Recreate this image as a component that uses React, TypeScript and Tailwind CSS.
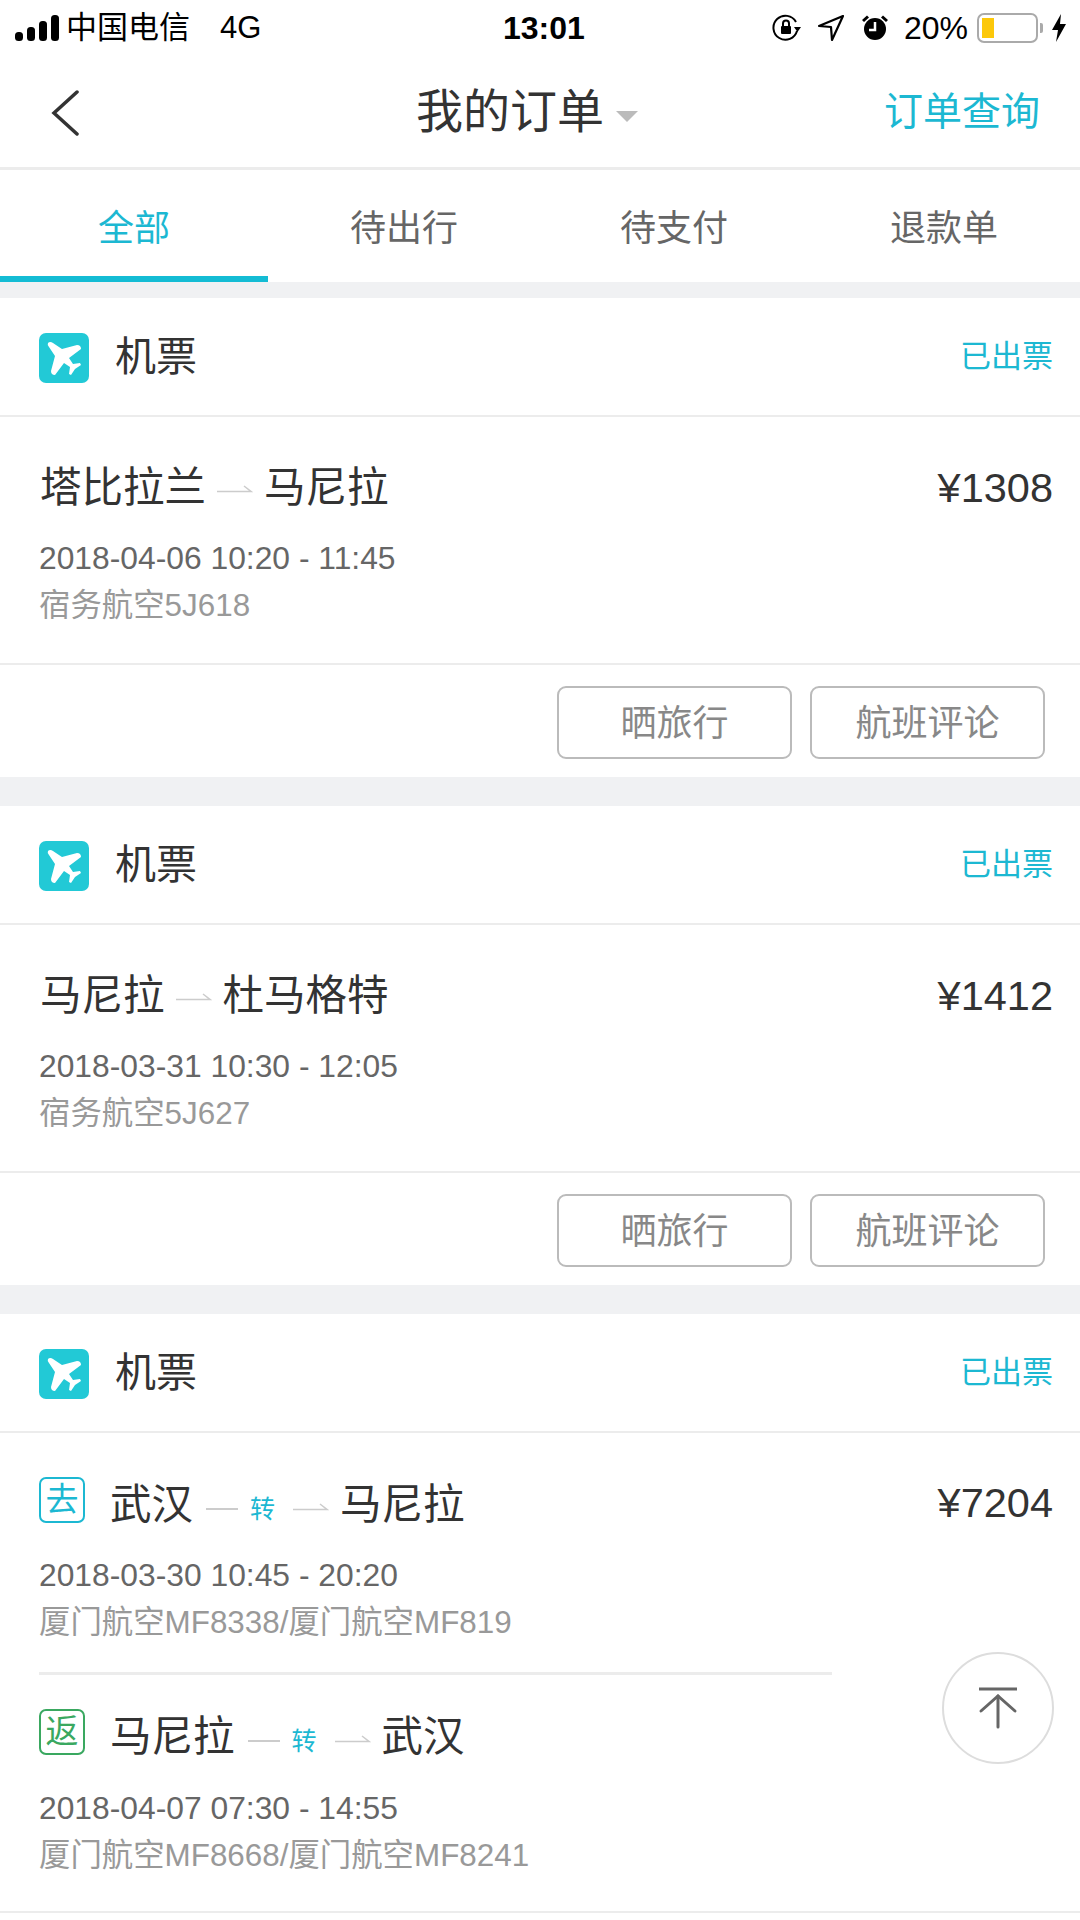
const font = "font-['Liberation_Sans','Noto_Sans_CJK_SC',sans-serif]"

function PlaneBadge() {
  return (
    <div className="w-[50px] h-[50px] rounded-[7px] bg-[#22c9d6]">
      <svg width="50" height="50" viewBox="0 0 50 50" fill="#fff">
        <path d="M9 10 Q11 8 14 10 L23 16 L38 12 Q42 12 42 16 L30 25 L34 31 L41 30 L42 32 L36 36 L32 42 L30 41 L31 34 L25 30 L16 42 Q12 42 12 38 L16 23 L10 14 Q8 12 9 10 Z" />
      </svg>
    </div>
  )
}

function Arrow() {
  return (
    <svg width="36" height="10" viewBox="0 0 36 10" fill="none" stroke="#ccc" strokeWidth="1.5">
      <path d="M0 7.5 H34 L27 2" />
    </svg>
  )
}

function Route({ from, to, transfer }: { from: string; to: string; transfer?: boolean }) {
  if (transfer) {
    return (
      <div className="flex items-center text-[41.5px] leading-[50px] text-[#333]">
        <span>{from}</span>
        <span className="w-[32px] h-[2px] bg-[#ccc] ml-[13px] mt-[9px]"></span>
        <span className="text-[25px] text-[#1cb8d2] ml-[12px] mr-[18px] mt-[9px]">转</span>
        <div className="mt-[5px]"><Arrow /></div>
        <span className="ml-[11px]">{to}</span>
      </div>
    )
  }
  return (
    <div className="flex items-center text-[41.5px] leading-[50px] text-[#333]">
      <span>{from}</span>
      <div className="ml-[11px] mr-[11px] mt-[2px]"><Arrow /></div>
      <span>{to}</span>
    </div>
  )
}

function CardHeader() {
  return (
    <div className="h-[119px] pt-[2px] pl-[39px] pr-[27px] flex items-center border-b-2 border-[#ececec]">
      <PlaneBadge />
      <span className="ml-[26px] text-[41px] text-[#333]">机票</span>
      <span className="ml-auto text-[31px] text-[#1cb8d2]">已出票</span>
    </div>
  )
}

function Meta({ time, flight, gap }: { time: string; flight: string; gap: string }) {
  return (
    <>
      <div className={`text-[31.8px] leading-[38px] text-[#666] ${gap}`}>{time}</div>
      <div className="text-[31.4px] leading-[38px] text-[#999] mt-[10px]">{flight}</div>
    </>
  )
}

function SingleCard({ from, to, price, time, flight }: { from: string; to: string; price: string; time: string; flight: string }) {
  return (
    <div className="bg-white">
      <CardHeader />
      <div className="h-[248px] pt-[46px] pl-[40px] pr-[27px] border-b-2 border-[#ececec]">
        <div className="flex justify-between">
          <Route from={from} to={to} />
          <span className="text-[41.5px] leading-[50px] text-[#333]">{price}</span>
        </div>
        <div className="-ml-px">
          <Meta time={time} flight={flight} gap="mt-[26px]" />
        </div>
      </div>
      <div className="h-[112px] flex justify-end gap-[18px] pt-[21px] pr-[35px]">
        <button className="w-[235px] h-[73px] pt-[2px] rounded-[9px] border-[2.5px] border-[#bbb] text-[36px] text-[#888]">晒旅行</button>
        <button className="w-[235px] h-[73px] pt-[2px] rounded-[9px] border-[2.5px] border-[#bbb] text-[36px] text-[#888]">航班评论</button>
      </div>
    </div>
  )
}

function Leg({ label, color, from, to, time, flight, gap }: { label: string; color: string; from: string; to: string; time: string; flight: string; gap: string }) {
  return (
    <div>
      <div className="flex items-center">
        <div className={`w-[46px] h-[46px] mb-[10px] rounded-[7px] border-2 text-[33px] flex items-center justify-center ${color}`}>{label}</div>
        <div className="ml-[25px]">
          <Route from={from} to={to} transfer />
        </div>
      </div>
      <Meta time={time} flight={flight} gap={gap} />
    </div>
  )
}

function App() {
  return (
    <div className={`w-[1080px] h-[1920px] overflow-hidden bg-white relative ${font}`}>
      {/* status bar */}
      <div className="h-[58px] pb-[2px] flex items-center relative text-black pl-[15px] pr-[13px]">
        <svg width="44" height="26" viewBox="0 0 44 26" fill="#000">
          <rect x="0" y="17" width="8" height="9" rx="3.5" />
          <rect x="12" y="12" width="8" height="14" rx="3.5" />
          <rect x="24" y="6" width="8" height="20" rx="3.5" />
          <rect x="36" y="0" width="8" height="26" rx="3.5" />
        </svg>
        <span className="ml-[7px] text-[31px]">中国电信</span>
        <span className="ml-[30px] text-[31px]">4G</span>
        <span className="absolute left-[503px] text-[32px] font-bold">13:01</span>
        <div className="ml-auto flex items-center">
          <svg width="30" height="28" viewBox="0 0 30 28" fill="none" stroke="#000" strokeWidth="2">
            <path d="M25 17 A12 12 0 1 1 24 8" />
            <path d="M22 13 L29 13 L25.5 18 Z" fill="#000" stroke="none" />
            <rect x="9" y="12" width="10" height="8" rx="1" fill="#000" stroke="none" />
            <path d="M11 12 V9.5 A3 3 0 0 1 17 9.5 V12" />
          </svg>
          <svg className="ml-[16px]" width="26" height="26" viewBox="0 0 26 26" fill="none" stroke="#000" strokeWidth="2.2" strokeLinejoin="round">
            <path d="M1 11 L25 1 L14 25 L13 12 Z" />
          </svg>
          <svg className="ml-[17px]" width="28" height="28" viewBox="0 0 28 28" fill="#000">
            <circle cx="14" cy="15" r="11" />
            <path d="M1 6 L6 1.5 L8 3.5 L3 8 Z M27 6 L22 1.5 L20 3.5 L25 8 Z" />
            <path d="M14 8 V16 H8" fill="none" stroke="#fff" strokeWidth="2.5" />
          </svg>
          <span className="ml-[15px] text-[32px]">20%</span>
          <div className="ml-[9px] w-[61px] h-[30px] rounded-[7px] border-2 border-[#aaa] p-[3px]">
            <div className="w-[12px] h-full bg-[#fcc80a]"></div>
          </div>
          <div className="ml-[2px] w-[3px] h-[10px] bg-[#aaa] rounded-r-[2px]"></div>
          <svg className="ml-[8px]" width="16" height="28" viewBox="0 0 16 28" fill="#000">
            <path d="M10 0 L1 16 H7 L5 28 L15 10 H9 Z" />
          </svg>
        </div>
      </div>

      {/* nav */}
      <div className="h-[112px] flex items-center relative border-b-[3px] border-[#ececec]">
        <svg className="absolute left-[50px] top-[32px]" width="32" height="48" viewBox="0 0 32 48" fill="none" stroke="#333" strokeWidth="3.5" strokeLinecap="round">
          <path d="M27 2 L4 23 L27 44" />
        </svg>
        <div className="absolute left-[416px] flex items-center">
          <span className="text-[47px] text-[#333]">我的订单</span>
          <div className="ml-[12px] mt-[8px] w-0 h-0 border-x-[11px] border-x-transparent border-t-[11px] border-t-[#bbb]"></div>
        </div>
        <span className="ml-auto mr-[40px] text-[39px] text-[#1cb8d2]">订单查询</span>
      </div>

      {/* tabs */}
      <div className="h-[112px] flex relative">
        {["全部", "待出行", "待支付", "退款单"].map((t, i) => (
          <div key={t} className={`w-[270px] pt-[5px] pr-[2px] flex items-center justify-center text-[36px] ${i === 0 ? "text-[#1cb8d2]" : "text-[#666]"}`}>
            {t}
          </div>
        ))}
        <div className="absolute left-0 bottom-0 w-[268px] h-[6px] bg-[#14bcd4]"></div>
      </div>
      <div className="h-[16px] bg-[#f0f1f3]"></div>

      <SingleCard from="塔比拉兰" to="马尼拉" price="¥1308" time="2018-04-06 10:20 - 11:45" flight="宿务航空5J618" />
      <div className="h-[29px] bg-[#f0f1f3]"></div>
      <SingleCard from="马尼拉" to="杜马格特" price="¥1412" time="2018-03-31 10:30 - 12:05" flight="宿务航空5J627" />
      <div className="h-[29px] bg-[#f0f1f3]"></div>

      <div className="bg-white">
        <CardHeader />
        <div className="pl-[39px] pr-[27px] pt-[42px] h-[480px] border-b-2 border-[#ececec] relative">
          <div className="w-[793px] border-b-[3px] border-[#ececec] pb-[30px]">
            <Leg label="去" color="border-[#1cb8d2] text-[#1cb8d2]" from="武汉" to="马尼拉" time="2018-03-30 10:45 - 20:20" flight="厦门航空MF8338/厦门航空MF819" gap="mt-[22px]" />
          </div>
          <div className="pt-[32px]">
            <Leg label="返" color="border-[#3aa860] text-[#3aa860]" from="马尼拉" to="武汉" time="2018-04-07 07:30 - 14:55" flight="厦门航空MF8668/厦门航空MF8241" gap="mt-[23px]" />
          </div>
          <span className="absolute right-[27px] top-[45px] text-[41.5px] leading-[50px] text-[#333]">¥7204</span>
        </div>
      </div>

      {/* back to top */}
      <div className="absolute left-[942px] top-[1652px] w-[112px] h-[112px] rounded-full border-2 border-[#ddd] bg-white flex items-center justify-center">
        <svg width="40" height="42" viewBox="0 0 40 42" fill="none" stroke="#666" strokeWidth="3" strokeLinecap="round">
          <path d="M1 2 H39" strokeLinecap="butt" />
          <path d="M3 24 L20 9 L37 24" />
          <path d="M20 9 V40" />
        </svg>
      </div>
    </div>
  )
}

export default App
